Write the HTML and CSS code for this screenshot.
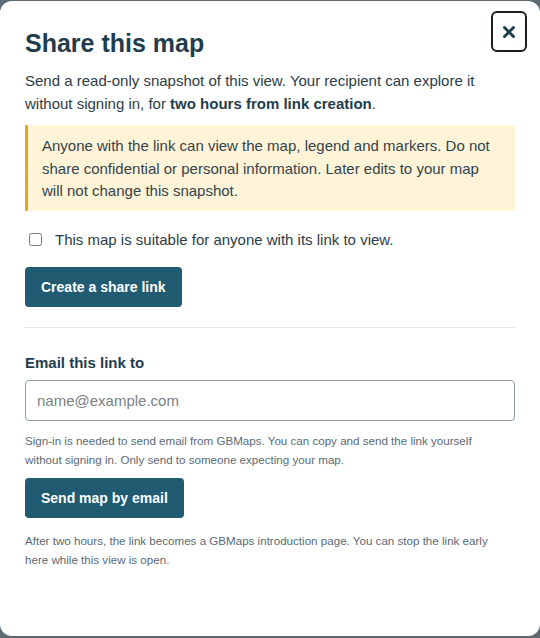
FILE: index.html
```html
<!DOCTYPE html>
<html lang="en">
  <head>
    <meta charset="UTF-8" />
    <meta name="viewport" content="width=device-width, initial-scale=1.0" />
    <title>Share this map</title>
    <link rel="stylesheet" href="styles.css">
  </head>
  <body>
    <div class="dialog" role="dialog" aria-labelledby="shareTitle">
      <div class="dialog-head">
        <h2 id="shareTitle">Share this map</h2>
        <button type="button" class="close" aria-label="Close">
          <svg width="14" height="14" viewBox="0 0 14 14">
            <path d="M2.5 2.5 L11.5 11.5 M11.5 2.5 L2.5 11.5" stroke="#1f3d4c" stroke-width="3" stroke-linecap="round" />
          </svg>
        </button>
      </div>
      <p class="intro">
        Send a read-only snapshot of this view. Your recipient can explore it
        without signing in, for <strong>two hours from link creation</strong>.
      </p>
      <div class="notice">
        Anyone with the link can view the map, legend and markers. Do not
        share confidential or personal information. Later edits to your map
        will not change this snapshot.
      </div>
      <label class="check">
        <input type="checkbox" id="suitable" />
        <span>This map is suitable for anyone with its link to view.</span>
      </label>
      <button type="button" class="primary">Create a share link</button>
      <hr class="divider" />
      <label for="emailTo" class="field-label">Email this link to</label>
      <input type="email" id="emailTo" class="text-input" placeholder="name@example.com" />
      <p class="hint">
        Sign-in is needed to send email from GBMaps. You can copy and send the link yourself
        without signing in. Only send to someone expecting your map.
      </p>
      <button type="button" class="primary">Send map by email</button>
      <p class="hint after">
        After two hours, the link becomes a GBMaps introduction page. You can stop the link early
        here while this view is open.
      </p>
    </div>
  </body>
</html>
```

FILE: styles.css
```css
html,
body {
  height: 100%;
}
body {
  margin: 0;
  background-color: #5d6a72;
  font-family: "Liberation Sans", Arial, sans-serif;
  color: #2b3d47;
}
.dialog {
  box-sizing: border-box;
  height: 635px;
  margin-top: 1px;
  background-color: #fff;
  border-radius: 12px;
  padding: 10px 25px 20px 25px;
}
.dialog-head {
  display: flex;
  justify-content: space-between;
  align-items: flex-start;
}
.dialog-head h2 {
  margin: 17px 0 0 0;
  font-size: 25px;
  line-height: 30px;
  color: #1f3d4c;
}
.close {
  width: 36px;
  height: 41px;
  margin-right: -12px;
  padding: 0;
  border: 2px solid #1a1f22;
  border-radius: 6px;
  background-color: #fff;
  display: flex;
  align-items: center;
  justify-content: center;
  cursor: pointer;
}
.intro {
  margin: 11px 0 10px 0;
  font-size: 15px;
  line-height: 23px;
}
.intro strong {
  color: #1f3d4c;
}
.notice {
  background-color: #fff4d8;
  border-left: 3px solid #e8a51d;
  padding: 10px 16px 8px 14px;
  font-size: 15px;
  line-height: 22.5px;
  color: #33434c;
}
.check {
  display: flex;
  align-items: center;
  margin: 18px 0 16px 0;
  font-size: 15px;
  line-height: 22px;
}
.check input {
  width: 13px;
  height: 13px;
  margin: 0 13px 0 4px;
}
.primary {
  height: 40px;
  padding: 0 16px;
  border: none;
  border-radius: 4px;
  background-color: #215b72;
  color: #fff;
  font-family: "Liberation Sans", Arial, sans-serif;
  font-weight: bold;
  font-size: 14px;
  cursor: pointer;
}
.primary:hover {
  background-color: #184758;
}
.divider {
  border: none;
  border-top: 1px solid #e0e7ea;
  margin: 20px 0 24px 0;
}
.field-label {
  display: block;
  font-weight: bold;
  font-size: 15px;
  line-height: 22px;
  color: #1f3d4c;
  margin-bottom: 6px;
}
.text-input {
  box-sizing: border-box;
  display: block;
  width: 100%;
  height: 41px;
  padding: 0 11px;
  border: 1px solid #8c9ca5;
  border-radius: 4px;
  font-family: "Liberation Sans", Arial, sans-serif;
  font-size: 15px;
  color: #2b3d47;
  outline: none;
}
.text-input::placeholder {
  color: #7a7f83;
}
.hint {
  max-width: 480px;
  margin: 10px 0 9px 0;
  font-size: 11.6px;
  line-height: 19px;
  color: #5a6a73;
}
.hint.after {
  margin-top: 13px;
}
```
